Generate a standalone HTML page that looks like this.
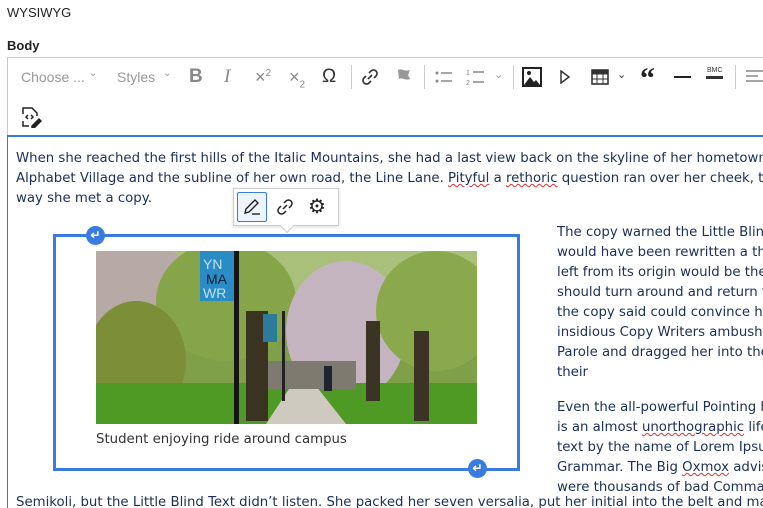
<!DOCTYPE html>
<html><head><meta charset="utf-8"><style>
*{margin:0;padding:0;box-sizing:border-box}
html,body{width:763px;height:508px;overflow:hidden}
body{background:#fff;font-family:"Liberation Sans",sans-serif;position:relative}
#w{position:absolute;left:0;top:0;width:763px;height:508px;overflow:hidden}
.a{position:absolute}
.lbl{font-size:13px;color:#222}
.tb{color:#999;font-size:14px}
.ct{font-family:"DejaVu Sans",sans-serif;font-size:13.3px;color:#1b2f57;white-space:nowrap;line-height:20px}
.sep{position:absolute;width:1px;height:24px;background:#ccc;top:65px}
.sq{text-decoration:underline wavy #d33;text-decoration-thickness:1px}
</style></head><body><div id="w">
<div class="a lbl" style="left:7px;top:5px">WYSIWYG</div>
<div class="a lbl" style="left:7px;top:38px;font-weight:bold">Body</div>
<div class="a" style="left:7px;top:57px;width:760px;height:80px;border:1px solid #c8c8c8;border-bottom:none;border-right:none"></div>
<div class="a" style="left:7px;top:135px;width:760px;height:380px;border-left:1px solid #3a78d8;border-top:2px solid #3a78d8"></div>
<div class="a tb" style="left:21px;top:69px">Choose ...</div>
<div class="a tb" style="left:89px;top:68px;font-size:10px">⌄</div>
<div class="a tb" style="left:117px;top:69px">Styles</div>
<div class="a tb" style="left:163px;top:68px;font-size:10px">⌄</div>
<div class="a" style="left:189px;top:66px;font-size:19px;font-weight:bold;color:#888">B</div>
<div class="a" style="left:224px;top:66px;font-size:19px;font-family:'Liberation Serif';font-style:italic;color:#888">I</div>
<div class="a" style="left:255px;top:67px;font-size:18px;color:#888">×<sup style="font-size:10px">2</sup></div>
<div class="a" style="left:289px;top:67px;font-size:18px;color:#888">×<sub style="font-size:10px">2</sub></div>
<div class="a" style="left:322px;top:66px;font-size:19px;color:#333">Ω</div>
<div class="sep" style="left:351px"></div>
<svg class="a" style="left:361px;top:68px" width="18" height="18" viewBox="0 0 18 18" fill="none" stroke="#333" stroke-width="1.6"><path d="M7 11l4-4M8 5l2-2a3 3 0 0 1 5 5l-2 2M10 13l-2 2a3 3 0 0 1-5-5l2-2"/></svg>
<svg class="a" style="left:394px;top:67px" width="20" height="20"><path d="M2 3l3 16M4 3c4-2 6 2 12 0l-2 5 2 4c-5 2-8-2-11 0z" fill="#999"/></svg>
<div class="sep" style="left:424px"></div>
<svg class="a" style="left:434px;top:68px" width="20" height="18"><circle cx="3" cy="5" r="1.5" fill="#888"/><circle cx="3" cy="13" r="1.5" fill="#888"/><path d="M7 5h11M7 13h11" stroke="#888" stroke-width="1.5"/></svg>
<svg class="a" style="left:466px;top:66px" width="20" height="22"><text x="0" y="9" font-size="7" fill="#888">1</text><text x="0" y="19" font-size="7" fill="#888">2</text><path d="M7 6h11M7 16h11" stroke="#888" stroke-width="1.5"/></svg>
<div class="a tb" style="left:494px;top:68px;font-size:11px">⌄</div>
<div class="sep" style="left:513px"></div>
<svg class="a" style="left:522px;top:67px" width="20" height="20"><rect x="1" y="1" width="18" height="18" fill="none" stroke="#222" stroke-width="2"/><path d="M2 18l6-8 4 5 2-2 4 5z" fill="#222"/><circle cx="7" cy="6" r="2" fill="#222"/></svg>
<svg class="a" style="left:559px;top:70px" width="12" height="14"><path d="M2 1l8 6-8 6z" fill="none" stroke="#333" stroke-width="1.5"/></svg>
<svg class="a" style="left:591px;top:69px" width="18" height="16"><rect x="1" y="1" width="16" height="14" fill="none" stroke="#333" stroke-width="1.6"/><path d="M1 5h16M1 10h16M6 5v10M12 5v10" stroke="#333"/><rect x="1" y="1" width="16" height="4" fill="#333"/></svg>
<div class="a" style="left:617px;top:68px;font-size:11px;color:#333">⌄</div>
<div class="a" style="left:640px;top:62px;font-size:30px;font-weight:bold;color:#222;font-family:'Liberation Serif'">“</div>
<div class="a" style="left:674px;top:76px;width:17px;height:2px;background:#222"></div>
<div class="a" style="left:707px;top:67px;font-size:7px;color:#333">BMC</div>
<div class="a" style="left:706px;top:76px;width:17px;height:3px;background:#333"></div>
<div class="sep" style="left:735px"></div>
<svg class="a" style="left:746px;top:69px" width="17" height="16"><path d="M0 2h17M0 7h12M0 12h17" stroke="#888" stroke-width="1.5"/></svg>
<svg class="a" style="left:20px;top:106px" width="22" height="22" fill="none" stroke="#222" stroke-width="1.5"><path d="M3 8V2h9l5 5v3M3 15v5h6"/><path d="M8 9l-2 2 2 2M11 9l2 2-2 2"/><path d="M12 20l7-7 2 2-7 7h-2z" fill="#222"/></svg>

<div class="a ct" style="left:16px;top:149px">When she reached the first hills of the Italic Mountains, she had a last view back on the skyline of her hometown<br>Alphabet Village and the subline of her own road, the Line Lane. <span class="sq">Pityful</span> a <span class="sq">rethoric</span> question ran over her cheek, then<br>way she met a copy.</div>

<div class="a ct" style="left:557px;top:223px">The copy warned the Little Blind Text<br>would have been rewritten a thousand<br>left from its origin would be the word<br>should turn around and return to its<br>the copy said could convince her and<br>insidious Copy Writers ambushed her<br>Parole and dragged her into their age<br>their</div>
<div class="a ct" style="left:557px;top:398px">Even the all-powerful Pointing has no<br>is an almost <span class="sq">unorthographic</span> life One<br>text by the name of Lorem Ipsum deci<br>Grammar. The Big <span class="sq">Oxmox</span> advised her<br>were thousands of bad Commas, wild</div>
<div class="a ct" style="left:16px;top:493px">Semikoli, but the Little Blind Text didn’t listen. She packed her seven versalia, put her initial into the belt and made</div>

<div class="a" style="left:53px;top:234px;width:467px;height:237px;border:3px solid #3a7be0"></div>
<div class="a" style="left:86px;top:226px;width:19px;height:19px;border-radius:50%;background:#3a7be0;color:#fff;font-size:12px;text-align:center;line-height:19px;font-weight:bold">↵</div>
<div class="a" style="left:468px;top:459px;width:19px;height:19px;border-radius:50%;background:#3a7be0;color:#fff;font-size:12px;text-align:center;line-height:19px;font-weight:bold">↵</div>

<svg class="a" style="left:96px;top:251px" width="381" height="173" viewBox="0 0 381 173">
<rect width="381" height="173" fill="#7f9f48"/>
<rect width="381" height="60" fill="#a9c07a"/>
<ellipse cx="40" cy="40" rx="60" ry="50" fill="#b7a9a6"/>
<ellipse cx="130" cy="50" rx="70" ry="60" fill="#86a548"/>
<ellipse cx="250" cy="80" rx="60" ry="70" fill="#c4b4bf"/>
<ellipse cx="340" cy="60" rx="60" ry="60" fill="#8aa84c"/>
<ellipse cx="40" cy="110" rx="50" ry="60" fill="#7c8e38"/>
<rect x="0" y="132" width="381" height="41" fill="#4f9a25"/>
<path d="M195 135h25l30 38h-80z" fill="#cfcac0"/>
<rect x="150" y="110" width="110" height="28" fill="#7f7a70"/>
<rect x="150" y="60" width="22" height="110" fill="#3a3322"/>
<rect x="270" y="70" width="14" height="80" fill="#3b3425"/>
<rect x="318" y="80" width="15" height="90" fill="#3b3425"/>
<rect x="138" y="0" width="5" height="173" fill="#151515"/>
<rect x="104" y="0" width="34" height="50" fill="#2a8cc4"/>
<text x="107" y="18" font-size="14" fill="#bfe0f0">YN</text><text x="110" y="33" font-size="14" fill="#123">MA</text><text x="107" y="47" font-size="14" fill="#bfe0f0">WR</text>
<rect x="167" y="63" width="14" height="28" fill="#2a7c9a"/>
<rect x="186" y="60" width="3" height="90" fill="#222"/>
<rect x="228" y="115" width="8" height="25" fill="#1f2530"/>
</svg>
<div class="a" style="left:96px;top:432px;font-family:'DejaVu Sans',sans-serif;font-size:13.3px;color:#333">Student enjoying ride around campus</div>

<div class="a" style="left:233px;top:188px;width:106px;height:38px;background:#fff;border:1px solid #ccc;box-shadow:0 1px 3px rgba(0,0,0,.15)"></div>
<div class="a" style="left:282px;top:221px;width:10px;height:10px;background:#fff;border-right:1px solid #ccc;border-bottom:1px solid #ccc;transform:rotate(45deg)"></div>
<div class="a" style="left:237px;top:192px;width:30px;height:30px;border:1px solid #3a7be0;border-radius:2px;background:#eef4fd"></div>
<svg class="a" style="left:242px;top:197px" width="20" height="20" fill="none" stroke="#222" stroke-width="1.4"><path d="M3 16l1-4 9-9 3 3-9 9z"/><path d="M10 17h8"/></svg>
<svg class="a" style="left:276px;top:198px" width="18" height="18" fill="none" stroke="#222" stroke-width="1.5"><path d="M7 11l4-4M8 5l2-2a3 3 0 0 1 5 5l-2 2M10 13l-2 2a3 3 0 0 1-5-5l2-2"/></svg>
<div class="a" style="left:308px;top:194px;font-size:20px;color:#222">⚙</div>
</div></body></html>
